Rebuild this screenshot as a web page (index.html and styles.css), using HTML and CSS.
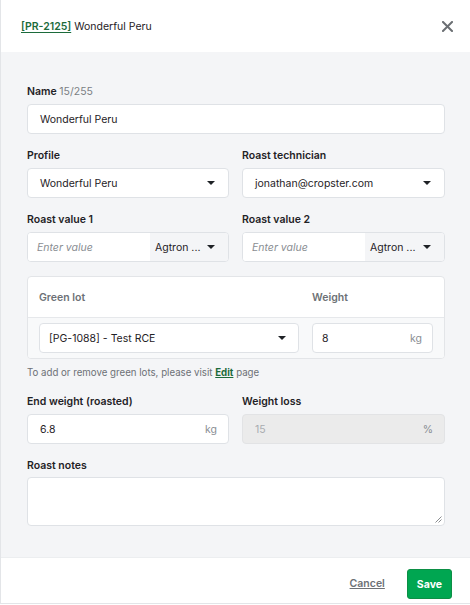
FILE: index.html
```html
<!DOCTYPE html>
<html>
<head>
<meta charset="utf-8">
<link rel="stylesheet" href="styles.css">
</head>
<body>
<div class="modal">
  <header class="modal-header">
    <h1 class="title"><a class="title-link" href="#">[PR-2125]</a> Wonderful Peru</h1>
    <button class="close" aria-label="Close">
      <svg width="11" height="11" viewBox="0 0 11 11"><path d="M1 1 L10 10 M10 1 L1 10" stroke="#6b6f73" stroke-width="2" stroke-linecap="square"/></svg>
    </button>
  </header>
  <main class="modal-body">
    <div class="field">
      <label class="label">Name <span class="counter">15/255</span></label>
      <div class="input"><span class="value">Wonderful Peru</span></div>
    </div>
    <div class="row">
      <div class="field">
        <label class="label">Profile</label>
        <div class="input select"><span class="value">Wonderful Peru</span><span class="caret"></span></div>
      </div>
      <div class="field">
        <label class="label">Roast technician</label>
        <div class="input select"><span class="value">jonathan@cropster.com</span><span class="caret"></span></div>
      </div>
    </div>
    <div class="row">
      <div class="field">
        <label class="label">Roast value 1</label>
        <div class="group">
          <div class="group-input"><span class="placeholder">Enter value</span></div>
          <div class="group-select"><span class="value">Agtron ...</span><span class="caret"></span></div>
        </div>
      </div>
      <div class="field">
        <label class="label">Roast value 2</label>
        <div class="group">
          <div class="group-input"><span class="placeholder">Enter value</span></div>
          <div class="group-select"><span class="value">Agtron ...</span><span class="caret"></span></div>
        </div>
      </div>
    </div>
    <div class="card">
      <div class="card-head">
        <span class="col-lot">Green lot</span>
        <span class="col-weight">Weight</span>
      </div>
      <div class="card-row">
        <div class="input select col-lot"><span class="value">[PG-1088] - Test RCE</span><span class="caret"></span></div>
        <div class="input col-weight"><span class="value">8</span><span class="unit">kg</span></div>
      </div>
    </div>
    <p class="hint">To add or remove green lots, please visit <a class="hint-link" href="#">Edit</a> page</p>
    <div class="row">
      <div class="field">
        <label class="label">End weight (roasted)</label>
        <div class="input"><span class="value">6.8</span><span class="unit">kg</span></div>
      </div>
      <div class="field">
        <label class="label">Weight loss</label>
        <div class="input disabled"><span class="value muted">15</span><span class="unit muted">%</span></div>
      </div>
    </div>
    <div class="field notes">
      <label class="label">Roast notes</label>
      <div class="textarea">
        <svg class="grip" width="7" height="7" viewBox="0 0 7 7"><path d="M6.5 0.5 L0.5 6.5 M6.5 3.5 L3.5 6.5" stroke="#8a8d90" stroke-width="1"/></svg>
      </div>
    </div>
  </main>
  <footer class="modal-footer">
    <a class="cancel" href="#">Cancel</a>
    <button class="save">Save</button>
  </footer>
</div>
</body>
</html>
```
FILE: styles.css
```css
* { box-sizing: border-box; }
html, body { margin: 0; padding: 0; }
body {
  font-family: Inter, "Noto Sans", sans-serif;
  font-size: 10.5px;
  color: #222529;
  background: #fff;
}
.modal {
  width: 470px;
  height: 604px;
  border-left: 1px solid #e3e5e8;
  border-bottom: 1px solid #e3e5e8;
  display: flex;
  flex-direction: column;
}
.modal-header {
  height: 52px;
  flex: none;
  display: flex;
  align-items: center;
  justify-content: space-between;
  padding: 0 16px 0 20px;
  background: #fff;
}
.title {
  margin: 0;
  font-size: 10.5px;
  font-weight: 400;
  color: #1f2226;
}
.title-link {
  color: #1c6b3b;
  font-weight: 600;
  text-decoration: underline;
  text-underline-offset: 2px;
}
.close {
  border: 0;
  background: none;
  padding: 0;
  width: 14px;
  height: 14px;
  display: flex;
  align-items: center;
  justify-content: center;
}
.modal-body {
  height: 505px;
  flex: none;
  background: #f4f5f7;
  padding: 32px 25px 0 26px;
  display: flex;
  flex-direction: column;
}
.field {
  display: flex;
  flex-direction: column;
  gap: 5px;
  margin-bottom: 14px;
}
.notes { gap: 4px; }
.row {
  display: grid;
  grid-template-columns: 202px 203px;
  column-gap: 13px;
}
.label {
  font-weight: 600;
  font-size: 10.5px;
  line-height: 14px;
  padding-top: 1px;
  color: #1f2226;
}
.counter {
  font-weight: 400;
  color: #7a7e83;
}
.input {
  height: 30px;
  background: #fff;
  border: 1px solid #dfe2e6;
  border-radius: 4px;
  display: flex;
  align-items: center;
  justify-content: space-between;
  padding: 0 11px 0 12px;
}
.value { color: #1f2226; }
.muted { color: #a9acb0; }
.unit { color: #8a8e93; }
.caret {
  width: 0;
  height: 0;
  border-left: 4px solid transparent;
  border-right: 4px solid transparent;
  border-top: 4px solid #1f2226;
  margin-right: 2px;
}
.disabled {
  background: #ebebeb;
  border-color: #e2e3e5;
}
.group {
  height: 30px;
  display: flex;
  border: 1px solid #dfe2e6;
  border-radius: 4px;
  overflow: hidden;
  background: #fff;
}
.group-input {
  width: 122px;
  display: flex;
  align-items: center;
  padding-left: 9px;
  background: #fff;
}
.placeholder {
  font-style: italic;
  color: #8a8e93;
}
.group-select {
  flex: 1;
  display: flex;
  align-items: center;
  justify-content: space-between;
  padding: 0 11px 0 5px;
  background: #f4f5f7;
}
.card {
  background: #fff;
  border: 1px solid #e3e5e8;
  border-radius: 4px;
  overflow: hidden;
}
.card-head {
  height: 41px;
  display: grid;
  grid-template-columns: 260px 121px;
  column-gap: 13px;
  align-items: center;
  padding: 0 11px 0 11px;
  font-weight: 600;
  font-size: 10.5px;
  color: #6d7176;
  border-bottom: 1px solid #e6e8eb;
}
.card-row {
  display: grid;
  grid-template-columns: 260px 121px;
  column-gap: 13px;
  padding: 5px 11px 5px 11px;
  background: #f8f9fa;
}
.card-row .input { padding: 0 10px 0 9px; }
.hint {
  margin: 7px 0 14px;
  font-size: 9.7px;
  line-height: 14px;
  color: #6d7176;
}
.hint-link {
  color: #1c6b3b;
  font-weight: 700;
  text-decoration: underline;
}
.textarea {
  height: 49px;
  background: #fff;
  border: 1px solid #dfe2e6;
  border-radius: 4px;
  position: relative;
}
.grip {
  position: absolute;
  right: 2px;
  bottom: 2px;
}
.modal-footer {
  flex: 1;
  background: #fff;
  border-top: 1px solid #eceef0;
  display: flex;
  align-items: flex-start;
  justify-content: flex-end;
  padding: 11px 18px 0 0;
  gap: 22px;
}
.cancel {
  color: #6d7176;
  font-weight: 600;
  font-size: 10.5px;
  text-decoration: underline;
  line-height: 30px;
}
.save {
  height: 30px;
  padding: 0 9px;
  background: #00a651;
  border: 1px solid #0c8f45;
  border-radius: 3px;
  color: #fff;
  font-family: Inter, "Noto Sans", sans-serif;
  font-weight: 700;
  font-size: 10.5px;
}
```
